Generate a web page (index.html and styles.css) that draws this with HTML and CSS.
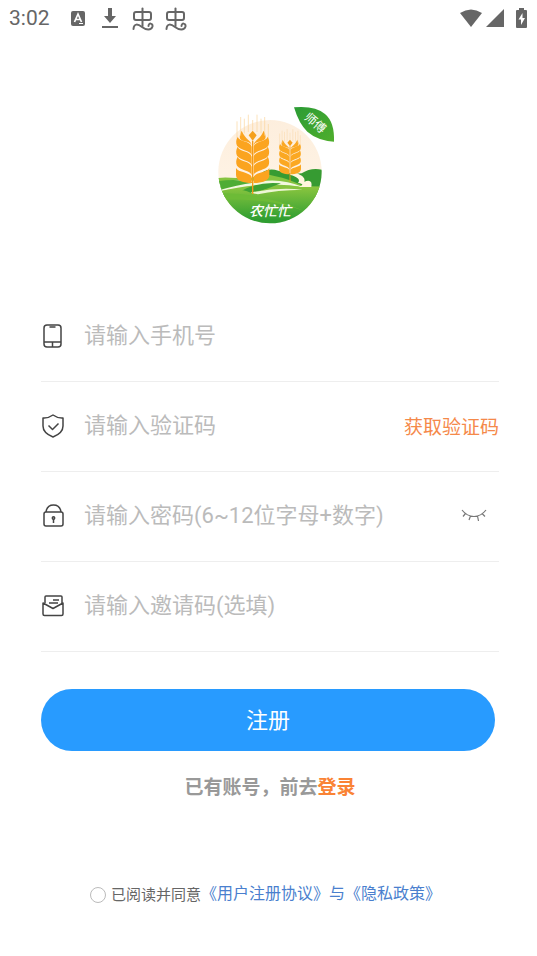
FILE: index.html
```html
<!DOCTYPE html>
<html lang="zh-CN">
<head>
  <meta charset="UTF-8">
  <meta name="viewport" content="width=device-width, initial-scale=1.0">
  <title>注册</title>
  <link rel="stylesheet" href="styles.css">
</head>
<body>
  <header class="status-bar">
    <span class="time">3:02</span>
    <div class="status-left">
      <svg width="16" height="16" viewBox="0 0 16 16">
        <rect x="1" y="1" width="14" height="15" rx="2" fill="#666"/>
        <path d="M4.5 12 8 4l3.500 8M5.800 9.500h4.400" fill="none" stroke="#fff" stroke-width="1.700"/>
        <path d="M9 13.500h4" stroke="#fff"/>
      </svg>
      <svg width="16" height="20" viewBox="0 0 16 20">
        <path d="M6 0h4v8h4l-6 7-6-7h4zM0 18h16v2H0z" fill="#666"/>
      </svg>
      <svg class="bug" width="22" height="24" viewBox="0 0 22 24"><use href="#bug"/></svg>
      <svg class="bug" width="22" height="24" viewBox="0 0 22 24"><use href="#bug"/></svg>
    </div>
    <div class="status-right">
      <svg width="22" height="18" viewBox="0 0 22 18"><path d="M0 4Q11-3 22 4L11 18z" fill="#666"/></svg>
      <svg width="18" height="18" viewBox="0 0 18 18"><path d="M18 0v18H0z" fill="#666"/></svg>
      <svg class="battery" width="11" height="20" viewBox="0 0 11 20">
        <path d="M3 0h5v2h2q1 0 1 1v16q0 1-1 1H1q-1 0-1-1V3q0-1 1-1h2z" fill="#666"/>
        <path d="M6.500 5 2.500 11.500h2.500V17l4-7H6.500z" fill="#fff"/>
      </svg>
    </div>
  </header>

  <svg width="0" height="0" class="defs">
    <defs>
      <g id="bug" fill="none" stroke="#666" stroke-width="2" stroke-linecap="round" stroke-linejoin="round">
        <rect x="2" y="5" width="17" height="8" rx="2"/>
        <path d="M10.500 1.500V19"/>
        <path d="M1.500 22C2 16 6 17 10 20S19 24 20.500 19.500C21 16 16.500 15.500 16.500 19"/>
      </g>
      <g id="wheat">
        <path d="M0 0V160" stroke="#f39a18" stroke-width="4"/>
        <path d="M0-30 12-16 0 0-12-16z" fill="#f5a01c"/>
        <path d="M-3 13C-5-2-22-3-33-30C-41-14-40-6-34-2C-24 4-8 2-3 13zM3 13C5-2 22-3 33-30C41-14 40-6 34-2C24 4 8 2 3 13z"/>
        <g id="pair">
          <path d="M-3 43C-7 29-37 29-47 15C-51 7-50-4-45-12C-40 4-7 0-3 18z"/>
          <path d="M3 43C7 29 37 29 47 15C51 7 50-4 45-12C40 4 7 0 3 18z"/>
        </g>
        <use href="#pair" y="30"/>
        <use href="#pair" y="60"/>
        <path d="M-3 127C-28 127-51 121-50 101V82C-44 96-8 94-3 109zM3 127C28 127 51 121 50 101V82C44 96 8 94 3 109z"/>
        <path d="M-47-8V-58M-36-15V-71M-25-22V-66M-13-26V-78M0-30V-62M13-26V-78M25-22V-66M36-15V-71M47-8V-50" stroke="#fad49c" stroke-width="2"/>
      </g>
    </defs>
  </svg>

  <main class="page">
    <svg class="logo" viewBox="0 0 405 405" role="img" aria-label="农忙忙师傅">
      <defs>
        <clipPath id="disc"><circle cx="180" cy="221" r="155"/></clipPath>
        <linearGradient id="sky" x1="0" y1="0" x2="0" y2="1">
          <stop offset="0" stop-color="#fdeedd"/>
          <stop offset="1" stop-color="#fff6e9"/>
        </linearGradient>
        <linearGradient id="field" x1="0" y1="0" x2="0" y2="1">
          <stop offset="0" stop-color="#8cc63f"/>
          <stop offset="0.800" stop-color="#2f9e31"/>
        </linearGradient>
        <linearGradient id="leaf" x1="0" y1="0" x2="1" y2="1">
          <stop offset="0" stop-color="#2b9b35"/>
          <stop offset="1" stop-color="#4fae2c"/>
        </linearGradient>
      </defs>
      <g clip-path="url(#disc)">
        <rect x="20" y="60" width="320" height="320" fill="url(#sky)"/>
        <path d="M140 240Q165 205 205 218T275 226Q305 206 340 216V300H20V240z" fill="#369b32"/>
        <path d="M20 240Q65 236 112 246Q155 223 193 234Q240 242 290 270L340 267V330H20z" fill="#86c440"/>
        <path d="M20 255Q90 240 150 251Q211 239 282 268Q170 246 20 282z" fill="#f3f8df"/>
        <path d="M20 250Q85 241 130 254Q81 260 20 279z" fill="#4ead35"/>
        <path d="M94 279Q145 249 213 256Q171 274 115 290z" fill="#3ea133"/>
        <path d="M20 282Q82 266 122 284Q218 259 340 266V390H20z" fill="url(#field)"/>
        <path d="M20 286Q150 280 285 340Q180 299 20 305z" fill="#6dbb37"/>
        <path d="M122 284Q200 267 278 275Q201 276 144 289z" fill="#edf6d5"/>
        <path d="M245 221Q289 232 283 251Q309 242 304 267H264Q290 259 264 255Q276 240 239 230z" fill="#fff6df"/>
      </g>
      <use href="#wheat" transform="translate(240 145) scale(.66)" fill="#fba822"/>
      <use href="#wheat" x="128" y="128" fill="#fba41f"/>
      <path d="M252 28Q315 22 345 48Q374 72 372 131Q322 127 292 101Q267 78 252 28z" fill="url(#leaf)"/>
      <text class="logo-name" x="180" y="355">农忙忙</text>
      <text class="logo-tag" transform="translate(315 76) rotate(41)" y="11">师傅</text>
    </svg>

    <form class="form">
      <div class="field">
        <label for="phone" aria-label="手机号">
          <svg class="icon" viewBox="0 0 24 26">
            <rect x="3" y="2" width="17" height="22" rx="3"/>
            <path d="M3 19h17M8.500 4h6M11.500 19v5"/>
          </svg>
        </label>
        <input id="phone" type="tel" placeholder="请输入手机号">
      </div>
      <div class="field">
        <label for="code" aria-label="验证码">
          <svg class="icon" viewBox="0 0 24 26">
            <path d="M12 2Q17 5.500 22 5v8q0 7-10 11Q2 20 2 13V5q5 .5 10-3z"/>
            <path d="m7.500 12.500 4 4 6-6"/>
          </svg>
        </label>
        <input id="code" type="text" placeholder="请输入验证码">
        <button class="get-code" type="button">获取验证码</button>
      </div>
      <div class="field">
        <label for="password" aria-label="密码">
          <svg class="icon" viewBox="0 0 24 26">
            <rect x="3" y="9" width="19" height="14" rx="2"/>
            <path d="M5 9q1-7 7.500-7T20 9M12.500 16v4"/>
            <circle cx="12.500" cy="15" r="1.200"/>
          </svg>
        </label>
        <input id="password" type="password" placeholder="请输入密码(6~12位字母+数字)">
        <button class="eye" type="button" aria-label="显示密码">
          <svg width="26" height="14" viewBox="0 0 26 14">
            <path d="M1 1q5 6.500 12 6.500T25 1M4.500 4.500l-2.500 3M9.500 7l-1.500 4M16.500 7l1 5M21 4.500l3 3"/>
          </svg>
        </button>
      </div>
      <div class="field">
        <label for="invite" aria-label="邀请码">
          <svg class="icon" viewBox="0 0 24 26">
            <path d="M4 10V4q0-1 1-1h15q1 0 1 1v6"/>
            <path d="M2 10v11q0 1.500 1.500 1.500h17q1.500 0 1.500-1.500V10l-10 5.500z"/>
            <path d="M12 7h6M8 10h9"/>
          </svg>
        </label>
        <input id="invite" type="text" placeholder="请输入邀请码(选填)">
      </div>
      <button class="submit" type="submit">注册</button>
      <p class="login">已有账号，前去<a href="#">登录</a></p>
      <div class="agree">
        <input id="agree" type="checkbox">
        <label for="agree">已阅读并同意</label>
        <span class="terms"><a href="#">《用户注册协议》</a>与<a href="#">《隐私政策》</a></span>
      </div>
    </form>
  </main>
</body>
</html>
```
FILE: styles.css
```css
* {
  box-sizing: border-box;
}

body {
  margin: 0;
  background-color: #fff;
  font-family: Roboto, "Noto Sans CJK SC", sans-serif;
}

input, button {
  font-family: inherit;
  border: none;
  background: none;
  padding: 0;
}

a {
  color: inherit;
  text-decoration: none;
}

.defs {
  position: absolute;
}

/* status bar */
.status-bar {
  display: flex;
  align-items: center;
  height: 36px;
  padding: 0 10px 0 9px;
  color: #666;
}

.time {
  font-size: 21px;
}

.status-left {
  display: flex;
  align-items: center;
  gap: 16px;
  margin-left: 20px;
}

.bug {
  margin: 2px -5px 0 0;
}

.bug:nth-child(3) {
  margin-left: -2px;
}

.status-right {
  display: flex;
  align-items: center;
  gap: 4px;
  margin-left: auto;
}

.battery {
  margin-left: 8px;
}

/* logo */
.page {
  padding: 62px 38px 0 41px;
}

.logo {
  display: block;
  width: 149px;
  height: 135px;
  margin: 0 auto;
  padding-left: 14px;
}

.logo-name {
  fill: #fff;
  font-size: 42px;
  font-weight: 500;
  font-style: italic;
  text-anchor: middle;
}

.logo-tag {
  fill: #fff;
  font-size: 36px;
  text-anchor: middle;
}

/* form */
.form {
  margin-top: 59px;
}

.field {
  display: flex;
  align-items: center;
  height: 90px;
  padding-bottom: 2px;
  border-bottom: 1px solid #eee;
}

.field label {
  display: flex;
  margin-right: 19px;
}

.icon {
  width: 24px;
  height: 26px;
  fill: none;
  stroke: #444;
  stroke-width: 1.5;
  stroke-linejoin: round;
}

.field input {
  flex: 1;
  min-width: 0;
  height: 40px;
  font-size: 22px;
  color: #333;
  outline: none;
}

.field input::placeholder {
  color: #bbb;
}

.get-code {
  font-size: 19px;
  color: #f5894a;
}

.eye {
  display: flex;
  margin-right: 12px;
}

.eye svg {
  fill: none;
  stroke: #777;
  stroke-width: 1.2;
}

.submit {
  display: block;
  width: calc(100% - 4px);
  height: 62px;
  margin-top: 37px;
  padding-bottom: 4px;
  border-radius: 31px;
  background-color: #289bff;
  color: #fff;
  font-size: 22px;
}

.login {
  margin: 22px 0 0;
  line-height: 30px;
  text-align: center;
  font-size: 19px;
  font-weight: bold;
  color: #999;
}

.login a {
  color: #fa8334;
}

.agree {
  display: flex;
  align-items: center;
  justify-content: center;
  margin-top: 76px;
  padding-right: 9px;
  line-height: 30px;
  font-size: 15px;
  color: #666;
}

.agree input {
  appearance: none;
  width: 16px;
  height: 16px;
  margin: 0 5px 0 0;
  border: 1px solid #bbb;
  border-radius: 50%;
}

.agree input:checked {
  background-color: #289bff;
}

.terms {
  padding-bottom: 2px;
  font-size: 16px;
  color: #4a7fce;
}
```
